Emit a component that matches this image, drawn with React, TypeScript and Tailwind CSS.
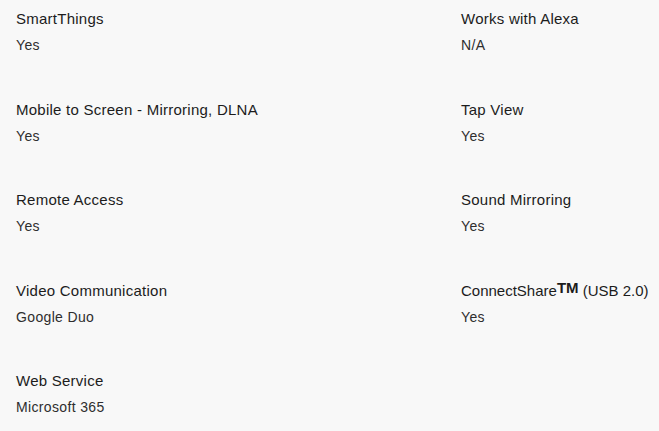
const specs: { label: React.ReactNode; value: string; tight?: boolean }[] = [
  { label: "SmartThings", value: "Yes" },
  { label: "Works with Alexa", value: "N/A" },
  { label: "Mobile to Screen - Mirroring, DLNA", value: "Yes" },
  { label: "Tap View", value: "Yes" },
  { label: "Remote Access", value: "Yes" },
  { label: "Sound Mirroring", value: "Yes" },
  { label: "Video Communication", value: "Google Duo" },
  {
    label: (
      <>
        ConnectShare<sup className="relative -top-[3px] text-[15px] font-bold">TM</sup> (USB 2.0)
      </>
    ),
    value: "Yes",
    tight: true,
  },
  { label: "Web Service", value: "Microsoft 365" },
];

export default function App() {
  return (
    <div className="w-[659px] h-[431px] overflow-hidden bg-[#f8f8f8] pl-4 pt-[9px] font-['Liberation_Sans',Arial,sans-serif]">
      <dl className="grid grid-cols-[445px_1fr]">
        {specs.map((s, i) => (
          <div key={i} className="h-[90.5px]">
            <dt className={s.tight ? "text-[15px] leading-5 tracking-normal text-[#1c1c1c]" : "text-[15px] leading-5 tracking-[0.25px] text-[#1c1c1c]"}>
              {s.label}
            </dt>
            <dd className="mt-[6px] text-[14px] leading-5 tracking-[0.35px] text-[#2e2e2e]">{s.value}</dd>
          </div>
        ))}
      </dl>
    </div>
  );
}
